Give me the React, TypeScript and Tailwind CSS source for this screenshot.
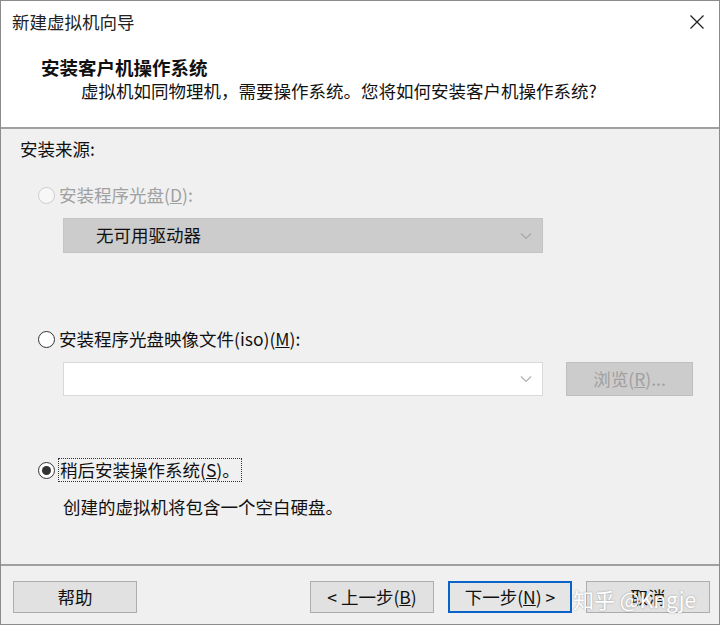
import React from "react";

const font = { fontFamily: '"Noto Sans CJK SC", "Noto Sans", sans-serif' };

function Radio({ checked, disabled }: { checked?: boolean; disabled?: boolean }) {
  return (
    <span
      className={`flex h-[17px] w-[17px] shrink-0 items-center justify-center rounded-full border ${
        disabled ? "border-[#cccccc] bg-[#f7f7f7]" : "border-[#333333] bg-white"
      }`}
    >
      {checked && <span className="h-[9px] w-[9px] rounded-full bg-[#333333]" />}
    </span>
  );
}

function Chevron({ color }: { color: string }) {
  return (
    <svg width="12" height="8" viewBox="0 0 12 8" fill="none">
      <path d="M1 1.5 L6 6.5 L11 1.5" stroke={color} strokeWidth="1.2" />
    </svg>
  );
}

function Btn({ children, primary }: { children: React.ReactNode; primary?: boolean }) {
  return (
    <div
      className={`flex h-[32px] w-[124px] items-center justify-center text-[17.5px] text-[#111] ${
        primary ? "border-2 border-[#0a64c8] bg-[#e5e5e5]" : "border border-[#adadad] bg-[#e1e1e1]"
      }`}
    >
      {children}
    </div>
  );
}

export default function App() {
  return (
    <div
      className="relative flex h-[625px] w-[720px] flex-col overflow-hidden border border-[#8c8c8c] bg-[#f0f0f0] text-[#111]"
      style={font}
    >
      {/* Title + header */}
      <div className="flex h-[126px] flex-col bg-white">
        <div className="flex h-[42px] items-center justify-between pl-[11px] pr-[14px]">
          <span className="text-[17.5px] text-[#222]">新建虚拟机向导</span>
          <svg width="16" height="16" viewBox="0 0 16 16">
            <path d="M1.5 1.5 L14.5 14.5 M14.5 1.5 L1.5 14.5" stroke="#222" strokeWidth="1.3" />
          </svg>
        </div>
        <div className="pl-[40px] pt-[12px] text-[18.5px] font-bold leading-[24px]">安装客户机操作系统</div>
        <div className="pl-[80px] text-[17.5px] leading-[24px]">
          虚拟机如同物理机，需要操作系统。您将如何安装客户机操作系统?
        </div>
      </div>
      <div className="h-[2px] bg-[#a0a0a0]" />

      {/* Body */}
      <div className="flex flex-1 flex-col pl-[19px] pr-[26px]">
        <div className="pt-[8px] text-[17.5px] leading-[24px]">安装来源:</div>

        <div className="mt-[22px] flex items-center gap-[4px] pl-[18px]">
          <Radio disabled />
          <span className="text-[17.5px] leading-[24px] text-[#a0a0a0]">
            安装程序光盘(<span className="underline">D</span>):
          </span>
        </div>
        <div className="ml-[43px] mt-[11px] flex h-[35px] w-[480px] items-center justify-between border border-[#c4c4c4] bg-[#cccccc] pl-[32px] pr-[10px]">
          <span className="text-[17.5px] text-[#111]">无可用驱动器</span>
          <Chevron color="#a8a8a8" />
        </div>

        <div className="mt-[74px] flex items-center gap-[4px] pl-[18px]">
          <Radio />
          <span className="text-[17.5px] leading-[24px]">
            安装程序光盘映像文件(iso)(<span className="underline">M</span>):
          </span>
        </div>
        <div className="mt-[11px] flex items-center">
          <div className="ml-[43px] flex h-[34px] w-[480px] items-center justify-end border border-[#d9d9d9] bg-white pr-[10px]">
            <Chevron color="#b0b0b0" />
          </div>
          <div className="ml-[23px] flex h-[34px] w-[127px] items-center justify-center border border-[#bfbfbf] bg-[#cccccc] text-[17.5px] text-[#a0a0a0]">
            浏览(<span className="underline">R</span>)...
          </div>
        </div>

        <div className="mt-[62px] flex items-center gap-[3px] pl-[18px]">
          <Radio checked />
          <span className="border border-dotted border-[#333] px-[1px] text-[17.5px] leading-[22px]">
            稍后安装操作系统(<span className="underline">S</span>)。
          </span>
        </div>
        <div className="pl-[43px] pt-[13px] text-[17.5px] leading-[24px]">创建的虚拟机将包含一个空白硬盘。</div>
      </div>

      <div className="h-[2px] bg-[#a0a0a0]" />
      <div className="flex h-[58px] items-start justify-between pl-[12px] pr-[9px] pt-[15px]">
        <Btn>帮助</Btn>
        <div className="flex gap-[14px]">
          <Btn>
            &lt; 上一步(<span className="underline">B</span>)
          </Btn>
          <Btn primary>
            下一步(<span className="underline">N</span>) &gt;
          </Btn>
          <Btn>取消</Btn>
        </div>
      </div>

      {/* watermark */}
      <div
        className="absolute left-[572px] top-[583px] text-[21px] text-white"
        style={{ textShadow: "0 0 2px rgba(0,0,0,0.35)" }}
      >
        知乎 @Kngje
      </div>
    </div>
  );
}
